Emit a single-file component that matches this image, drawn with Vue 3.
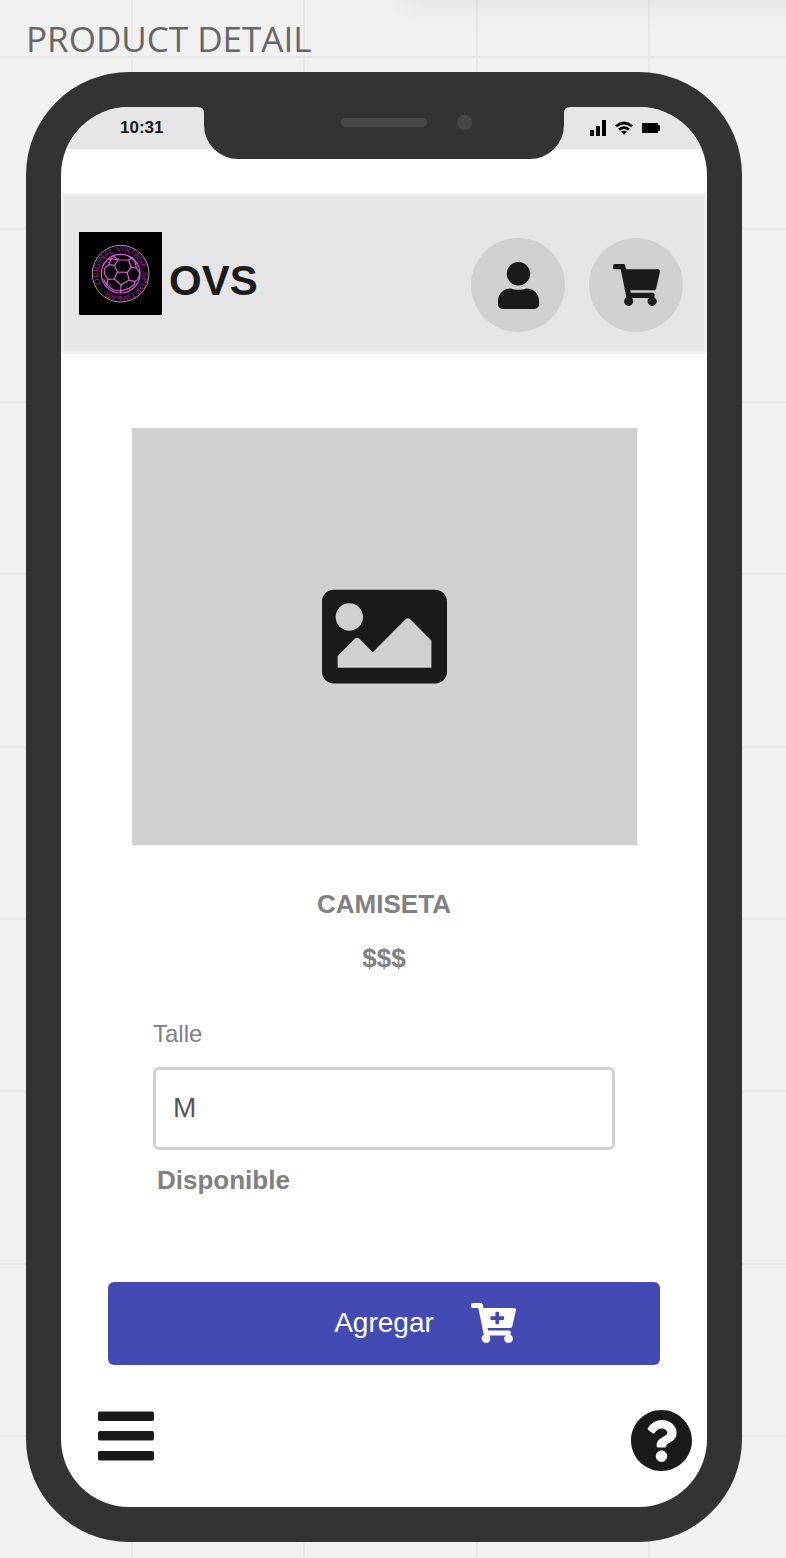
<script setup>
import { ref } from 'vue'

const size = ref('M')
const gridStep = 1724 / 10
const rows = Array.from({ length: 14 }, (_, i) => Math.round(57 + i * gridStep))
const columns = Array.from({ length: 14 }, (_, i) => Math.round(132 + i * gridStep))
</script>

<template>
  <main class="board">
    <svg class="board-grid" aria-hidden="true">
      <line v-for="y in rows" :key="'r' + y" x1="0" x2="100%" :y1="y" :y2="y" />
      <line v-for="x in columns" :key="'c' + x" :x1="x" :x2="x" y1="0" y2="100%" />
    </svg>
    <div class="toolbar-shadow"></div>

    <h1 class="frame-title">PRODUCT DETAIL</h1>

    <section class="phone">
      <div class="screen">
        <div class="status">
          <span class="time">10:31</span>
          <span class="signals">
            <svg width="16" height="16" viewBox="0 0 16 16" aria-hidden="true">
              <path d="M0 10h4v6H0zM6 6h4v10H6zM12 0h4v16h-4z" />
            </svg>
            <svg width="18" height="14" viewBox="0 0 18 14" aria-hidden="true">
              <path d="M1 5.200Q9 -1.200 17 5.200M4 8.600Q9 4.600 14 8.600" fill="none" stroke="currentColor" stroke-width="2.700" />
              <path d="M6 10.800Q9 8.800 12 10.800L9 13.800Z" />
            </svg>
            <svg width="18" height="10" viewBox="0 0 18 10" aria-hidden="true">
              <path d="M0 0h16v2h1q1 0 1 1v4q0 1-1 1h-1v2H0z" />
            </svg>
          </span>
        </div>

        <svg class="notch" width="372" height="52" viewBox="0 0 372 52" aria-hidden="true">
          <path fill="#333" d="M0 0H372Q366 0 366 6V18A34 34 0 0 1 332 52H40A34 34 0 0 1 6 18V6Q6 0 0 0Z" />
          <rect x="143" y="11" width="86" height="9" rx="4.500" fill="#474747" />
          <circle cx="266.500" cy="15.500" r="7.700" fill="#474747" />
        </svg>

        <header class="header">
          <a class="brand" href="#">
            <svg class="logo" width="83" height="83" viewBox="0 0 249 249" aria-hidden="true">
              <rect width="249" height="249" fill="#000" />
              <defs>
                <path id="badge-ring" d="M66 155A66 66 0 1 1 184 155A66 66 0 0 1 66 155" />
              </defs>
              <circle cx="125" cy="125" r="85" fill="none" stroke="#c4c4c4" stroke-width="2.500" />
              <text class="badge-text"><textPath href="#badge-ring">ORIGINAL VINTAGE SPORTWEAR</textPath></text>
              <g fill="none" stroke="#e45be4" stroke-width="3.500" stroke-linejoin="round">
                <circle cx="125" cy="125" r="58" />
                <path d="M115 120L145 121L150 144L126 159L106 141Z" />
                <path d="M115 120L107 100L117 84H149L156 106L145 121" />
                <path d="M107 100L90 98L76 110V124L86 142L106 141M90 98L96 80L117 84L104 72M149 84L162 76M96 80L88 82" />
                <path d="M156 106L172 108L182 122L179 140L168 149L150 144M172 108L168 88L149 72" />
                <path d="M126 159L125 177L104 174L84 160L86 142M125 177L148 170L166 158L168 149M125 177V183M84 160L74 142" />
              </g>
            </svg>
            <span class="brand-name">OVS</span>
          </a>
          <nav class="actions">
            <button class="round" type="button" aria-label="Perfil">
              <svg width="41" height="47" viewBox="0 0 448 512" aria-hidden="true">
                <path d="M224 256c70.700 0 128-57.300 128-128S294.700 0 224 0 96 57.300 96 128s57.300 128 128 128zm89.600 32c-22 0-28 14-89.600 14s-67.600-14-89.600-14C60.200 288 0 348.200 0 422.400V464c0 26.500 21.500 48 48 48h352c26.500 0 48-21.500 48-48v-41.600c0-74.200-60.200-134.400-134.400-134.400z" />
              </svg>
            </button>
            <button class="round" type="button" aria-label="Carrito">
              <svg width="47" height="42" viewBox="0 0 576 512" aria-hidden="true">
                <path d="M528.12 301.319l47.273-208C578.806 78.301 567.391 64 551.99 64H159.208l-9.166-44.81C147.758 8.021 137.93 0 126.529 0H24C10.745 0 0 10.745 0 24v16c0 13.255 10.745 24 24 24h69.883l70.248 343.435C147.325 417.1 136 435.222 136 456c0 30.928 25.072 56 56 56s56-25.072 56-56c0-15.674-6.447-29.835-16.824-40h209.647C430.447 426.165 424 440.326 424 456c0 30.928 25.072 56 56 56s56-25.072 56-56c0-22.172-12.888-41.332-31.579-50.405l5.517-24.276c3.413-15.018-8.002-29.319-23.403-29.319H218.117l-6.545-32h293.145c11.206 0 20.92-7.754 23.403-18.681z" />
              </svg>
            </button>
          </nav>
        </header>

        <div class="picture">
          <svg width="125" height="95" viewBox="0 64 512 384" role="img" aria-label="Camiseta">
            <path d="M464 448H48c-26.51 0-48-21.49-48-48V112c0-26.51 21.49-48 48-48h416c26.51 0 48 21.49 48 48v288c0 26.51-21.49 48-48 48zM112 120c-30.928 0-56 25.072-56 56s25.072 56 56 56 56-25.072 56-56-25.072-56-56-56zM64 384h384V272l-87.515-87.515c-4.686-4.686-12.284-4.686-16.971 0L208 320l-55.515-55.515c-4.686-4.686-12.284-4.686-16.971 0L64 336v48z" />
          </svg>
        </div>

        <div class="summary">
          <h2>CAMISETA</h2>
          <p>$$$</p>
        </div>

        <form class="field" @submit.prevent>
          <label for="size">Talle</label>
          <input id="size" v-model="size" type="text" />
          <p class="stock">Disponible</p>
        </form>

        <button class="add" type="button">
          <span>Agregar</span>
          <svg width="45" height="40" viewBox="0 0 576 512" aria-hidden="true">
            <path d="M504.717 320H211.572l6.545 32h268.418c15.401 0 26.816 14.301 23.403 29.319l-5.517 24.276C523.112 414.668 536 433.828 536 456c0 31.202-25.519 56.444-56.824 55.994-29.823-.429-54.35-24.631-55.155-54.447-.44-16.287 6.085-31.049 16.803-41.548H231.176C241.553 426.165 248 440.326 248 456c0 31.813-26.528 57.431-58.67 55.938-28.54-1.325-51.751-24.385-53.251-52.917-1.158-22.034 10.436-41.455 28.051-51.586L93.883 64H24C10.745 64 0 53.255 0 40V24C0 10.745 10.745 0 24 0h102.529c11.401 0 21.228 8.021 23.513 19.19L159.208 64H551.99c15.401 0 26.816 14.301 23.403 29.319l-47.273 208C525.637 312.246 515.923 320 504.717 320zM408 168h-48v-40c0-8.837-7.163-16-16-16h-16c-8.837 0-16 7.163-16 16v40h-48c-8.837 0-16 7.163-16 16v16c0 8.837 7.163 16 16 16h48v40c0 8.837 7.163 16 16 16h16c8.837 0 16-7.163 16-16v-40h48c8.837 0 16-7.163 16-16v-16c0-8.837-7.163-16-16-16z" />
          </svg>
        </button>

        <footer class="footer">
          <button type="button" aria-label="Menú">
            <svg width="56" height="52" viewBox="0 0 56 52" aria-hidden="true">
              <rect y="1.500" width="56" height="9.500" rx="2" />
              <rect y="21" width="56" height="9.500" rx="2" />
              <rect y="41" width="56" height="9.500" rx="2" />
            </svg>
          </button>
          <button type="button" aria-label="Ayuda">
            <svg width="61" height="61" viewBox="8 8 496 496" aria-hidden="true">
              <path d="M504 256c0 136.997-111.043 248-248 248S8 392.997 8 256C8 119.083 119.043 8 256 8s248 111.083 248 248zM262.655 90c-54.497 0-89.255 22.957-116.549 63.758-3.536 5.286-2.353 12.415 2.715 16.258l34.699 26.31c5.205 3.947 12.621 3.008 16.665-2.122 17.864-22.658 30.113-35.797 57.303-35.797 20.429 0 45.698 13.148 45.698 32.958 0 14.976-12.363 22.667-32.534 33.976C247.128 238.528 216 254.941 216 296v4c0 6.627 5.373 12 12 12h56c6.627 0 12-5.373 12-12v-1.333c0-28.462 83.186-29.647 83.186-106.667 0-58.002-60.165-102-116.531-102zM256 338c-25.365 0-46 20.635-46 46 0 25.364 20.635 46 46 46s46-20.636 46-46c0-25.365-20.635-46-46-46z" />
            </svg>
          </button>
        </footer>
      </div>
    </section>
  </main>
</template>

<style>
body {
  background: #f1f1f1;
}
</style>

<style scoped>
.board {
  position: relative;
  box-sizing: border-box;
  min-height: 100vh;
  padding: 15px 44px 16px 26px;
  overflow: hidden;
  font-family: "Liberation Sans", Arial, sans-serif;
  color: #1a1a1a;
}

.board-grid {
  position: absolute;
  inset: 0;
  width: 100%;
  height: 100%;
  stroke: #e8e8e8;
  stroke-width: 2;
}

.toolbar-shadow {
  position: absolute;
  top: -20px;
  left: 404px;
  right: -40px;
  height: 20px;
  box-shadow: 0 2px 28px rgba(40, 40, 70, 0.1);
}

h1,
h2,
p {
  margin: 0;
}

button {
  padding: 0;
  border: 0;
  background: none;
  color: inherit;
  font: inherit;
}

svg {
  display: block;
  flex: none;
  fill: currentColor;
}

.frame-title {
  position: relative;
  margin-bottom: 9px;
  font: 400 35px/48px "Open Sans", sans-serif;
  color: #666;
}

.phone {
  position: relative;
  padding: 35px;
  border-radius: 103px;
  background: #333;
}

.screen {
  position: relative;
  overflow: hidden;
  border-radius: 68px;
  background: #fff;
}

.status {
  display: flex;
  justify-content: space-between;
  align-items: center;
  height: 42px;
  padding: 0 47px 0 59px;
  background: #e5e5e5;
}

.time {
  font-size: 17px;
  font-weight: 700;
  line-height: 20px;
}

.signals {
  display: flex;
  align-items: center;
  gap: 9px;
  color: #000;
}

.notch {
  position: absolute;
  top: 0;
  left: calc(50% - 186px);
}

.header {
  display: flex;
  justify-content: space-between;
  align-items: center;
  box-sizing: border-box;
  height: 161px;
  margin-top: 44px;
  padding: 0 21px 0 15px;
  border: 3px solid #f1f1f1;
  background: #e5e5e5;
}

.brand {
  display: flex;
  align-items: center;
  gap: 7px;
  color: inherit;
  text-decoration: none;
}

.brand-name {
  padding-top: 14px;
  font-size: 42px;
  font-weight: 700;
  line-height: 48px;
}

.badge-text {
  fill: #b414b4;
  font-size: 24px;
}

.actions {
  display: flex;
  gap: 24px;
  padding-top: 23px;
}

.round {
  display: grid;
  place-items: center;
  width: 94px;
  height: 94px;
  border-radius: 50%;
  background: #d0d0d0;
}

.picture {
  display: grid;
  place-items: center;
  height: 417px;
  margin: 74px 70px 0 71px;
  background: #d0d0d0;
}

.summary {
  display: grid;
  gap: 24px;
  margin-top: 44px;
  text-align: center;
  color: #808080;
}

.summary h2,
.summary p,
.stock {
  font-size: 26px;
  font-weight: 700;
  line-height: 30px;
}

.field {
  display: flex;
  flex-direction: column;
  margin: 47px 92px 0;
  color: #808080;
}

.field label {
  font-size: 24px;
  line-height: 28px;
}

.field input {
  box-sizing: border-box;
  width: 100%;
  height: 83px;
  margin: 19px 0 15px;
  padding: 0 17px 2px;
  border: 3px solid #d0d0d0;
  border-radius: 6px;
  background: #fff;
  color: #555;
  font: 28px/32px "Liberation Sans", Arial, sans-serif;
}

.stock {
  padding-left: 4px;
}

.add {
  display: grid;
  grid-template-columns: 1fr auto 1fr;
  align-items: center;
  width: calc(100% - 94px);
  height: 83px;
  margin: 87px 47px 0;
  padding-bottom: 2px;
  border-radius: 6px;
  background: #434bb2;
  color: #fff;
  font-size: 28px;
  line-height: 32px;
}

.add span {
  grid-column: 2;
}

.add svg {
  margin-left: 37px;
}

.footer {
  display: flex;
  justify-content: space-between;
  align-items: flex-start;
  padding: 45px 15px 36px 37px;
}
</style>
